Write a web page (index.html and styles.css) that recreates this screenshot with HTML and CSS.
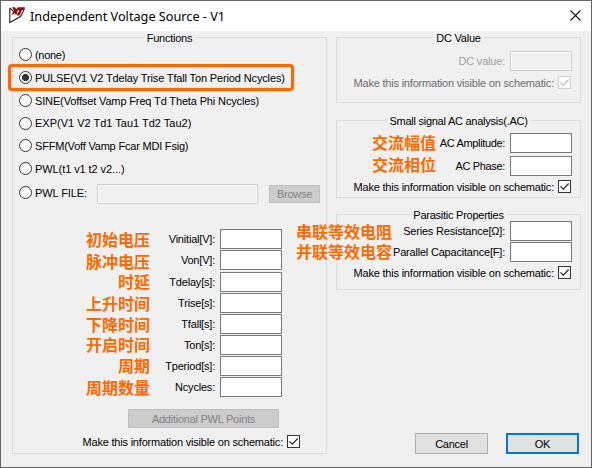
FILE: index.html
```html
<!DOCTYPE html>
<html lang="zh">
<head>
<meta charset="utf-8">
<title>Independent Voltage Source - V1</title>
<link rel="stylesheet" href="styles.css">
</head>
<body>
<main class="dialog">
  <header class="titlebar">
    <svg class="logo" width="17" height="17" viewBox="0 0 17 17"><path d="M.8.8v14.700L11.500 9.500 15.500 1.500M.8.8l5 5" fill="none" stroke="#222" stroke-width="1.1"/><path d="M3 .3h3l1.200 2L9 .3h7L15 3h-2l-2.500 5.500H8l2.200-5.500-1.500.4L8 5.500l1 2H6.500L5.800 6 4.500 7.500H2.500L5 4z" fill="#8c1018"/></svg>
    <h1 class="title">Independent Voltage Source - V1</h1>
    <svg class="close" width="11" height="11" viewBox="0 0 11 11"><path d="M.5.5l10 10M10.500.5l-10 10" stroke="#111" stroke-width="1.1"/></svg>
  </header>
  <div class="content">
    <section class="group functions">
      <h2 class="legend">Functions</h2>
      <div class="options">
        <label class="option"><i class="radio"></i><span class="t-none">(none)</span></label>
        <label class="option marked"><i class="radio on"></i><span class="t-pulse">PULSE(V1 V2 Tdelay Trise Tfall Ton Period Ncycles)</span></label>
        <label class="option"><i class="radio"></i><span class="t-sine">SINE(Voffset Vamp Freq Td Theta Phi Ncycles)</span></label>
        <label class="option short"><i class="radio"></i><span class="t-exp">EXP(V1 V2 Td1 Tau1 Td2 Tau2)</span></label>
        <label class="option"><i class="radio"></i><span class="t-sffm">SFFM(Voff Vamp Fcar MDI Fsig)</span></label>
        <label class="option"><i class="radio"></i><span class="t-pwl">PWL(t1 v1 t2 v2...)</span></label>
        <div class="option file"><i class="radio"></i><span class="t-pwl">PWL FILE:</span><i class="field path off"></i><button class="btn browse off" disabled>Browse</button></div>
      </div>
      <div class="params">
        <div class="row"><b class="note">初始电压</b><span class="name">Vinitial[V]:</span><i class="field"></i></div>
        <div class="row tall"><b class="note low">脉冲电压</b><span class="name">Von[V]:</span><i class="field"></i></div>
        <div class="row"><b class="note up">时延</b><span class="name">Tdelay[s]:</span><i class="field"></i></div>
        <div class="row"><b class="note">上升时间</b><span class="name">Trise[s]:</span><i class="field"></i></div>
        <div class="row"><b class="note">下降时间</b><span class="name">Tfall[s]:</span><i class="field"></i></div>
        <div class="row"><b class="note up">开启时间</b><span class="name">Ton[s]:</span><i class="field"></i></div>
        <div class="row"><b class="note up">周期</b><span class="name">Tperiod[s]:</span><i class="field"></i></div>
        <div class="row"><b class="note">周期数量</b><span class="name">Ncycles:</span><i class="field"></i></div>
      </div>
      <button class="btn points off" disabled>Additional PWL Points</button>
      <div class="visible"><span>Make this information visible on schematic:</span><svg class="check" viewBox="1 1 11 11"><path d="M2.500 6.300l2.800 2.900 5.400-5.700"/></svg></div>
    </section>
    <div class="side">
      <section class="group dc">
        <h2 class="legend">DC Value</h2>
        <div class="row off"><span class="name">DC value:</span><i class="field off"></i></div>
        <div class="visible off"><span>Make this information visible on schematic:</span><svg class="check" viewBox="1 1 11 11"><path d="M2.500 6.300l2.800 2.900 5.400-5.700"/></svg></div>
      </section>
      <section class="group ac">
        <h2 class="legend">Small signal AC analysis(.AC)</h2>
        <div class="row"><b class="note">交流幅值</b><span class="name">AC Amplitude:</span><i class="field"></i></div>
        <div class="row"><b class="note">交流相位</b><span class="name">AC Phase:</span><i class="field"></i></div>
        <div class="visible"><span>Make this information visible on schematic:</span><svg class="check" viewBox="1 1 11 11"><path d="M2.500 6.300l2.800 2.900 5.400-5.700"/></svg></div>
      </section>
      <section class="group parasitic">
        <h2 class="legend">Parasitic Properties</h2>
        <div class="row"><b class="note">串联等效电阻</b><span class="name">Series Resistance[Ω]:</span><i class="field"></i></div>
        <div class="row"><b class="note">并联等效电容</b><span class="name">Parallel Capacitance[F]:</span><i class="field"></i></div>
        <div class="visible"><span>Make this information visible on schematic:</span><svg class="check" viewBox="1 1 11 11"><path d="M2.500 6.300l2.800 2.900 5.400-5.700"/></svg></div>
      </section>
      <footer class="actions"><button class="btn">Cancel</button><button class="btn primary">OK</button></footer>
    </div>
  </div>
</main>
</body>
</html>
```
FILE: styles.css
```css
*, *::after { box-sizing: border-box; }
body { margin: 0; font: 11px/14px "Liberation Sans", Arial, sans-serif; color: #000; letter-spacing: -0.2px; }
h1, h2 { margin: 0; font-weight: normal; }
.dialog { width: 592px; height: 468px; border: 1px solid #666; background: #f0f0f0; overflow: hidden; white-space: nowrap; }
.titlebar { height: 30px; background: #fff; display: flex; align-items: center; padding: 0 10px 0 8px; }
.logo { margin: -1px 4px 0 0; }
.title { font: 12.7px/20px "Noto Sans", sans-serif; letter-spacing: 0; color: #000; }
.close { margin: -2px 0 0 auto; }
.content { display: flex; gap: 9px; padding: 6px 10px 0 11px; }
.group { position: relative; border: 1px solid #dcdcdc; }
.legend { position: absolute; top: -7px; left: 50%; transform: translateX(-50%); background: #f0f0f0; padding: 0 3px; font-size: 11px; line-height: 14px; letter-spacing: -0.25px; }
.functions { width: 315px; height: 417px; }
.options { padding: 5px 5px 0 6px; }
.option { position: relative; display: flex; align-items: center; height: 23px; }
.option.short { height: 22px; }
.option.file { height: 25px; }
.t-none { letter-spacing: -0.3px; }
.t-pulse, .t-sine { letter-spacing: -0.14px; }
.t-exp { letter-spacing: 0; }
.t-pwl { letter-spacing: -0.08px; }
.radio { flex: none; width: 13px; height: 13px; border: 1px solid #333; border-radius: 50%; background: #fff; margin-right: 3px; }
.radio.on { background: radial-gradient(circle, #333 3.2px, #fff 3.9px); }
.option.marked::after { content: ""; position: absolute; left: -11px; top: -2px; width: 286px; height: 27px; border: 3px solid #ff6a00; border-radius: 4px; box-shadow: 0 0 1px #777, inset 0 0 1px #777; }
.field { flex: none; width: 62px; height: 20px; border: 1px solid #7a7a7a; background: #fff; }
.field.off { border-color: #ccc; background: #f0f0f0; box-shadow: inset 0 0 0 1px #fff; }
.path { width: 161px; margin: 2px 11px 0 auto; }
.btn { font: inherit; letter-spacing: -0.25px; color: #000; padding: 0; width: 73px; height: 21px; border: 1px solid #adadad; background: #e1e1e1; }
.btn.off { background: #ccc; border-color: #bfbfbf; color: #838383; }
.browse { width: 51px; height: 18px; margin: 2px 1px 0 0; }
.params { margin-top: 24px; }
.row { display: flex; justify-content: flex-end; align-items: center; height: 21px; }
.row.tall { height: 22px; }
.params .row { padding-right: 44px; align-items: flex-start; }
.params .name { line-height: 20px; }
.name { text-align: right; margin-right: 5px; }
.note { font: bold 16px/20px "Noto Sans CJK SC", sans-serif; color: #ff6a00; letter-spacing: 0; }
.params .note { margin-right: auto; width: 137px; text-align: right; }
.params .note.up { line-height: 18px; }
.params .note.low { line-height: 22px; }
.points { display: block; width: 151px; height: 19px; margin: 11px 0 0 115px; }
.visible { display: flex; align-items: center; justify-content: flex-end; height: 13px; }
.functions .visible { margin: 7px 26px 0 0; }
.check { width: 13px; height: 13px; border: 1px solid #333; background: #fff; margin-left: 4px; }
.check path { fill: none; stroke: #222; stroke-width: 1.2; }
.visible.off { color: #6d6d6d; }
.visible.off .check { border-color: #ccc; }
.visible.off path { stroke: #bbb; }
.row.off { color: #a0a0a0; }
.side { width: 245px; }
.side .row { padding-right: 8px; height: 20px; }
.side .visible { padding-right: 9px; }
.dc { height: 66px; padding-top: 13px; }
.dc .visible { margin-top: 5px; }
.ac { height: 78px; margin-top: 17px; padding-top: 12px; }
.ac .name { letter-spacing: -0.35px; }
.ac .row + .row { margin-top: 3px; }
.ac .visible { margin-top: 4px; }
.ac .note { margin: -2px auto 0 35px; }
.ac .row + .row .note { margin-top: -4px; }
.parasitic { height: 76px; margin-top: 16px; padding-top: 6px; }
.parasitic .row + .row { margin-top: 1px; }
.parasitic .visible { margin-top: 4px; }
.parasitic .note { margin: 0 auto 0 -41px; }
.parasitic .row + .row .note { margin-top: -3px; }
.actions { display: flex; gap: 18px; justify-content: flex-end; margin: 143px 2px 0 0; }
.primary { border: 2px solid #0078d7; }
```
